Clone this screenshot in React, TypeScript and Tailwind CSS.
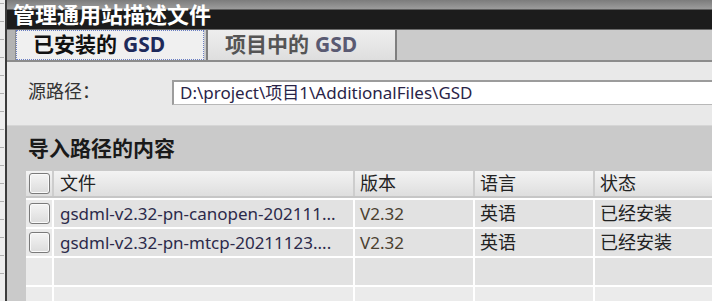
const cjk = "font-['Noto_Sans','Noto_Sans_CJK_SC',sans-serif]";

const rows = [
  { file: 'gsdml-v2.32-pn-canopen-202111...', version: 'V2.32', lang: '英语', status: '已经安装' },
  { file: 'gsdml-v2.32-pn-mtcp-20211123....', version: 'V2.32', lang: '英语', status: '已经安装' },
  null,
  null,
];

function Checkbox() {
  return (
    <div className="w-[21px] h-[21px] rounded-[3px] border border-[#7a7a7a] bg-[linear-gradient(#f4f4f4,#dcdcdc)] shadow-[inset_0_0_0_1px_#fafafa]" />
  );
}

export default function App() {
  return (
    <div className={`w-[712px] h-[301px] overflow-hidden flex bg-[#cacaca] ${cjk}`}>
      {/* window behind */}
      <div className="w-[5px] shrink-0 bg-[#ededed] flex flex-col gap-[17px] pt-[3px]">
        {[0, 1, 2, 3, 4, 5, 6, 7, 8, 9, 10, 11, 12, 13, 14, 15].map((i) => (
          <div key={i} className="h-px w-[4px] bg-[#b0b0b0]" />
        ))}
      </div>
      <div className="w-[2px] shrink-0 bg-[#3c3c3c]" />

      <div className="flex-1 flex flex-col min-w-0">
        {/* title bar */}
        <div className="h-[29px] shrink-0 flex items-center bg-[linear-gradient(#7c7c7c_0px,#9c9c9c_9px,#1c1c1c_10px,#1c1c1c_100%)] pl-[6px] text-white font-bold text-[22px] leading-[26px]">
          <span className="-mt-[2px]">管理通用站描述文件</span>
        </div>

        {/* tabs */}
        <div className="h-[33px] shrink-0 flex bg-[#cbcbcb] border-t border-[#6a6a6a] border-b-2 border-b-[#8c8c8c]">
          <div className="w-[9px] bg-[#b3b3b3] border-r border-[#8a8a8a]" />
          <div className="w-[188px] bg-[#f0f0f0] border border-dotted border-[#6b7fc4] flex items-center pl-[16px] text-[21px] font-bold text-[#111]">
            已安装的 <span className="ml-[6px] text-[#1e2a5a]">GSD</span>
          </div>
          <div className="ml-[2px] w-[191px] bg-[linear-gradient(#eeeeee,#dedede)] border-x-2 border-[#7f7f7f] flex items-center pl-[17px] text-[21px] font-bold text-[#555]">
            项目中的 <span className="ml-[6px] text-[#5a5a72]">GSD</span>
          </div>
        </div>

        {/* source path */}
        <div className="h-[64px] shrink-0 bg-[#e9e9e9] flex items-center pl-[21px] border-b border-[#d6d6d6]">
          <div className="w-[144px] text-[18px] text-[#333] -mt-[4px]">源路径：</div>
          <div className="flex-1 h-[25px] bg-white border-t-2 border-l-2 border-[#9c9c9c] border-b border-b-[#b8b8b8] flex items-center pl-[6px] text-[17px] text-[#2a2448] -mt-[2px] whitespace-nowrap">
            D:\project\项目1\AdditionalFiles\GSD
          </div>
        </div>

        {/* import section */}
        <div className="flex-1 bg-[#cacaca] pl-[19px] flex flex-col">
          <div className="h-[45px] shrink-0 flex items-center pl-[2px] text-[21px] font-bold text-[#1a1a1a]">导入路径的内容</div>
          <div className="flex flex-col text-[17px]">
            <div className="h-[27px] shrink-0 flex bg-[linear-gradient(#f3f3f3,#dedede)] border-b-2 border-[#c6c6c6] text-[#222] text-[18px]">
              <div className="w-[28px] flex items-center justify-center border-r-2 border-[#cdcdcd]">
                <Checkbox />
              </div>
              <div className="w-[301px] pl-[6px] flex items-center border-r-2 border-[#cdcdcd]">文件</div>
              <div className="w-[120px] pl-[5px] flex items-center border-r-2 border-[#cdcdcd]">版本</div>
              <div className="w-[120px] pl-[5px] flex items-center border-r-2 border-[#cdcdcd]">语言</div>
              <div className="flex-1 pl-[5px] flex items-center">状态</div>
            </div>
            {rows.map((r, i) => (
              <div
                key={i}
                className={`h-[29px] shrink-0 flex border-t-2 border-white ${i === 3 ? 'bg-[#ebebeb]' : 'bg-[#e2e2e2]'}`}
              >
                <div className={`w-[28px] flex items-center justify-center border-r-2 border-white ${i === 3 ? 'bg-[#ebebeb]' : 'bg-[#eaeaea]'}`}>
                  {r && <Checkbox />}
                </div>
                <div className="w-[301px] pl-[6px] flex items-center border-r-2 border-white text-[#2c2a4a] whitespace-nowrap overflow-hidden">
                  {r?.file}
                </div>
                <div className="w-[120px] pl-[5px] flex items-center border-r-2 border-white text-[#4a4030]">{r?.version}</div>
                <div className="w-[120px] pl-[5px] flex items-center border-r-2 border-white text-[#222] text-[18px]">{r?.lang}</div>
                <div className="flex-1 pl-[5px] flex items-center text-[#222] text-[18px]">{r?.status}</div>
              </div>
            ))}
          </div>
        </div>
      </div>
    </div>
  );
}
